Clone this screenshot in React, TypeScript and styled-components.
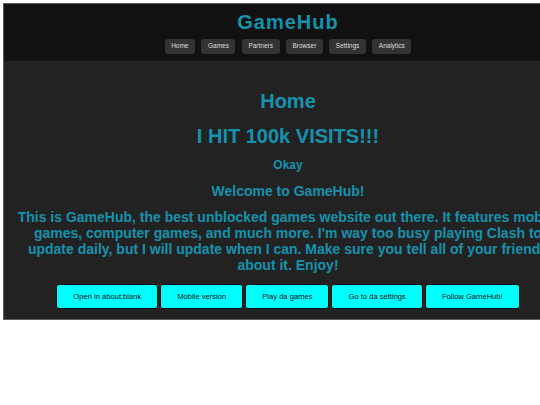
import styled, { createGlobalStyle } from 'styled-components'

const GlobalStyle = createGlobalStyle`
  html, body {
    margin: 0;
    padding: 0;
    background: #fff;
    overflow: hidden;
  }
  body {
    font-family: 'Liberation Sans', Arial, sans-serif;
  }
`

const teal = '#1592ad'

const navItems = ['Home', 'Games', 'Partners', 'Browser', 'Settings', 'Analytics']
const actions = ['Open in about:blank', 'Mobile version', 'Play da games', 'Go to da settings', 'Follow GameHub!']

export default function App() {
  return (
    <>
      <GlobalStyle />
      <Frame>
        <Header>
          <Logo>GameHub</Logo>
          <Nav>
            {navItems.map((item) => (
              <NavButton key={item} type='button'>
                {item}
              </NavButton>
            ))}
          </Nav>
        </Header>

        <Main>
          <Title>Home</Title>
          <Title>I HIT 100k VISITS!!!</Title>
          <Small>Okay</Small>
          <Welcome>Welcome to GameHub!</Welcome>
          <Intro>
            This is GameHub, the best unblocked games website out there. It features mobile games,
            computer games, and much more. I'm way too busy playing Clash to update daily, but I will
            update when I can. Make sure you tell all of your friends about it. Enjoy!
          </Intro>
          <Actions>
            {actions.map((label) => (
              <ActionButton key={label} type='button'>
                {label}
              </ActionButton>
            ))}
          </Actions>
        </Main>
      </Frame>
    </>
  )
}

const Frame = styled.div`
  margin: 3px 0 0 3px;
  width: 568px;
  border: 1px solid #5c5c5c;
  background: #222;
  display: flex;
  flex-direction: column;
`

const Header = styled.header`
  background: #111;
  padding: 7px 0 7px;
  display: flex;
  flex-direction: column;
  align-items: center;
`

const Logo = styled.div`
  color: ${teal};
  font-size: 20px;
  font-weight: bold;
  letter-spacing: 1px;
  line-height: 23px;
  margin-bottom: 5px;
`

const Nav = styled.nav`
  display: flex;
  gap: 6.5px;
  justify-content: center;
`

const NavButton = styled.button`
  height: 14.5px;
  padding: 0 6.5px;
  background: #333;
  color: #ddd;
  border: none;
  border-radius: 3px;
  font-family: 'Liberation Sans', Arial, sans-serif;
  font-size: 6.5px;
  line-height: 14.5px;
`

const Main = styled.main`
  padding: 29.5px 10px 9.5px;
  display: flex;
  flex-direction: column;
  align-items: center;
  text-align: center;
  color: ${teal};
  font-weight: bold;
`

const Title = styled.h1`
  margin: 0 0 11.6px;
  font-size: 20px;
  line-height: 23px;
`

const Small = styled.p`
  margin: 0 0 10px;
  font-size: 12px;
  line-height: 13.8px;
`

const Welcome = styled.h2`
  margin: 0 0 9.6px;
  font-size: 14px;
  line-height: 16.1px;
`

const Intro = styled.p`
  margin: 0 0 10.6px;
  font-size: 14px;
  line-height: 16.1px;
`

const Actions = styled.div`
  display: flex;
  gap: 2px;
  justify-content: center;
`

const ActionButton = styled.button`
  height: 25.5px;
  padding: 0 16px;
  background: #00ffff;
  color: #111;
  border: 1px solid #111;
  border-radius: 3px;
  font-family: 'Liberation Sans', Arial, sans-serif;
  font-size: 7.6px;
`
